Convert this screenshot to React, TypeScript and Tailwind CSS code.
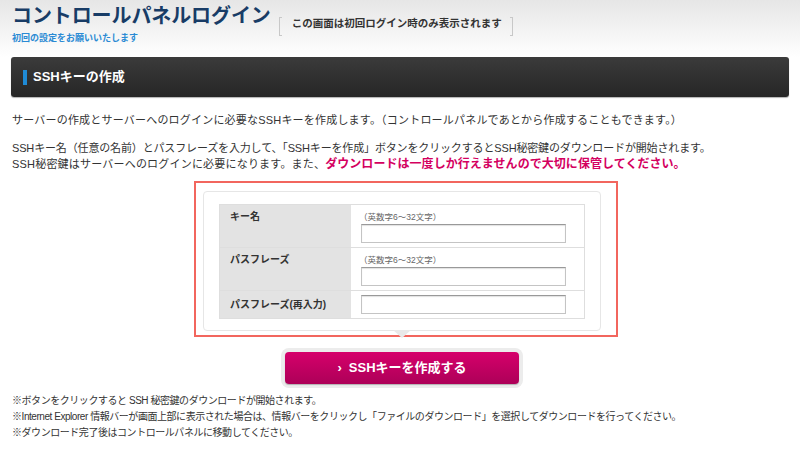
import React from "react";

const FONT = { fontFamily: '"Liberation Sans", "Noto Sans CJK JP", sans-serif' };

const NOTES = [
  "※ボタンをクリックすると SSH 秘密鍵のダウンロードが開始されます。",
  "※Internet Explorer 情報バーが画面上部に表示された場合は、情報バーをクリックし「ファイルのダウンロード」を選択してダウンロードを行ってください。",
  "※ダウンロード完了後はコントロールパネルに移動してください。",
];

function FieldRow({
  label,
  hint,
  last,
}: {
  label: string;
  hint?: string;
  last?: boolean;
}) {
  return (
    <div className={`flex ${last ? "" : "border-b border-[#dedede]"}`}>
      <div
        className={`w-[131px] shrink-0 bg-[#e3e3e3] pl-[10px] text-[10px] font-bold text-[#333] ${
          hint ? "h-[42px] pt-[5px] leading-[14px]" : "flex h-[27px] items-center"
        }`}
      >
        {label}
      </div>
      <div className="flex-1 pl-[8px]">
        {hint ? (
          <>
            <div className="pt-[6px] text-[8.5px] leading-[12px] text-[#666]">
              {hint}
            </div>
            <input
              className="ml-[2px] mt-[1px] block h-[19px] w-[205px] border border-[#c4c4c4] border-t-[#999] bg-white shadow-[inset_0_1px_1px_rgba(0,0,0,0.12)] outline-none"
              type="text"
            />
          </>
        ) : (
          <input
            className="ml-[2px] mt-[4px] block h-[19px] w-[205px] border border-[#c4c4c4] border-t-[#999] bg-white shadow-[inset_0_1px_1px_rgba(0,0,0,0.12)] outline-none"
            type="text"
          />
        )}
      </div>
    </div>
  );
}

export default function App() {
  return (
    <div
      className="relative h-[456px] w-[800px] overflow-hidden bg-white text-[#333]"
      style={FONT}
    >
      {/* header */}
      <div className="h-[57px] bg-gradient-to-b from-[#e6e6e6] to-white px-[12px] pt-[3px]">
        <div className="flex items-start">
          <div>
            <div className="text-[20px] font-bold leading-[26px] tracking-[-0.1px] text-[#183c66]">
              コントロールパネルログイン
            </div>
            <div className="mt-[3px] text-[9px] font-bold leading-[12px] text-[#2a8ad4]">
              初回の設定をお願いいたします
            </div>
          </div>
          <div className="ml-[8px] mt-[14px] flex h-[19px] w-[234px] items-stretch">
            <div className="w-[3px] border-y border-l border-[#c8c8c8]" />
            <div className="flex-1 pl-[10px] text-[10.5px] font-bold leading-[12px] text-[#333]">
              この画面は初回ログイン時のみ表示されます
            </div>
            <div className="w-[3px] border-y border-r border-[#c8c8c8]" />
          </div>
        </div>
      </div>

      {/* section bar */}
      <div className="mx-[11px] flex h-[40px] items-center rounded-[3px] bg-gradient-to-b from-[#3b3b3b] to-[#262626] shadow-[0_1px_1px_rgba(0,0,0,0.3)]">
        <div className="ml-[12px] h-[15px] w-[4px] bg-[#1f8bd6]" />
        <div className="ml-[6px] text-[13px] font-bold text-white">
          SSHキーの作成
        </div>
      </div>

      {/* description */}
      <div className="px-[12px]">
        <p className="mt-[15px] text-[11px] leading-[16px] tracking-[0.2px]">
          サーバーの作成とサーバーへのログインに必要なSSHキーを作成します。（コントロールパネルであとから作成することもできます。）
        </p>
        <p className="mt-[12px] text-[11px] leading-[16px] tracking-[-0.15px]">
          SSHキー名（任意の名前）とパスフレーズを入力して、「SSHキーを作成」ボタンをクリックするとSSH秘密鍵のダウンロードが開始されます。
          <br />
          <span className="tracking-[0.2px]">
            SSH秘密鍵はサーバーへのログインに必要になります。また、
          </span>
          <span className="text-[12px] font-bold tracking-[0.05px] text-[#d4005f]">
            ダウンロードは一度しか行えませんので大切に保管してください。
          </span>
        </p>
      </div>

      {/* form */}
      <div className="relative ml-[194px] mt-[9px] h-[156px] w-[424px] border-2 border-[#f2665e] pl-[7px] pt-[8px]">
        <div className="relative h-[140px] w-[398px] rounded-[4px] border border-[#e6e6e6] bg-white px-[15px] pt-[12px]">
          <div className="border border-[#dedede]">
            <FieldRow label="キー名" hint="（英数字6～32文字）" />
            <FieldRow label="パスフレーズ" hint="（英数字6～32文字）" />
            <FieldRow label="パスフレーズ(再入力)" last />
          </div>
        </div>
        <div className="absolute left-[197px] top-[147px] h-0 w-0 border-x-[9px] border-t-[8px] border-x-transparent border-t-[#e9e9e9]" />
      </div>

      {/* button */}
      <div className="ml-[281px] mt-[11px] h-[40px] w-[242px] rounded-[8px] bg-[#ececec] p-[4px]">
        <button className="flex h-[32px] w-full items-center justify-center rounded-[4px] bg-gradient-to-b from-[#d6006b] to-[#ad0058] text-[13px] font-bold text-white shadow-[0_1px_1px_rgba(0,0,0,0.25)]">
          <span className="mr-[7px] text-[13px]">›</span>
          SSHキーを作成する
        </button>
      </div>

      {/* notes */}
      <div className="mt-[5px] px-[12px]">
        {NOTES.map((n) => (
          <div key={n} className="text-[10px] leading-[16px] tracking-[-0.45px]">
            {n}
          </div>
        ))}
      </div>
    </div>
  );
}
